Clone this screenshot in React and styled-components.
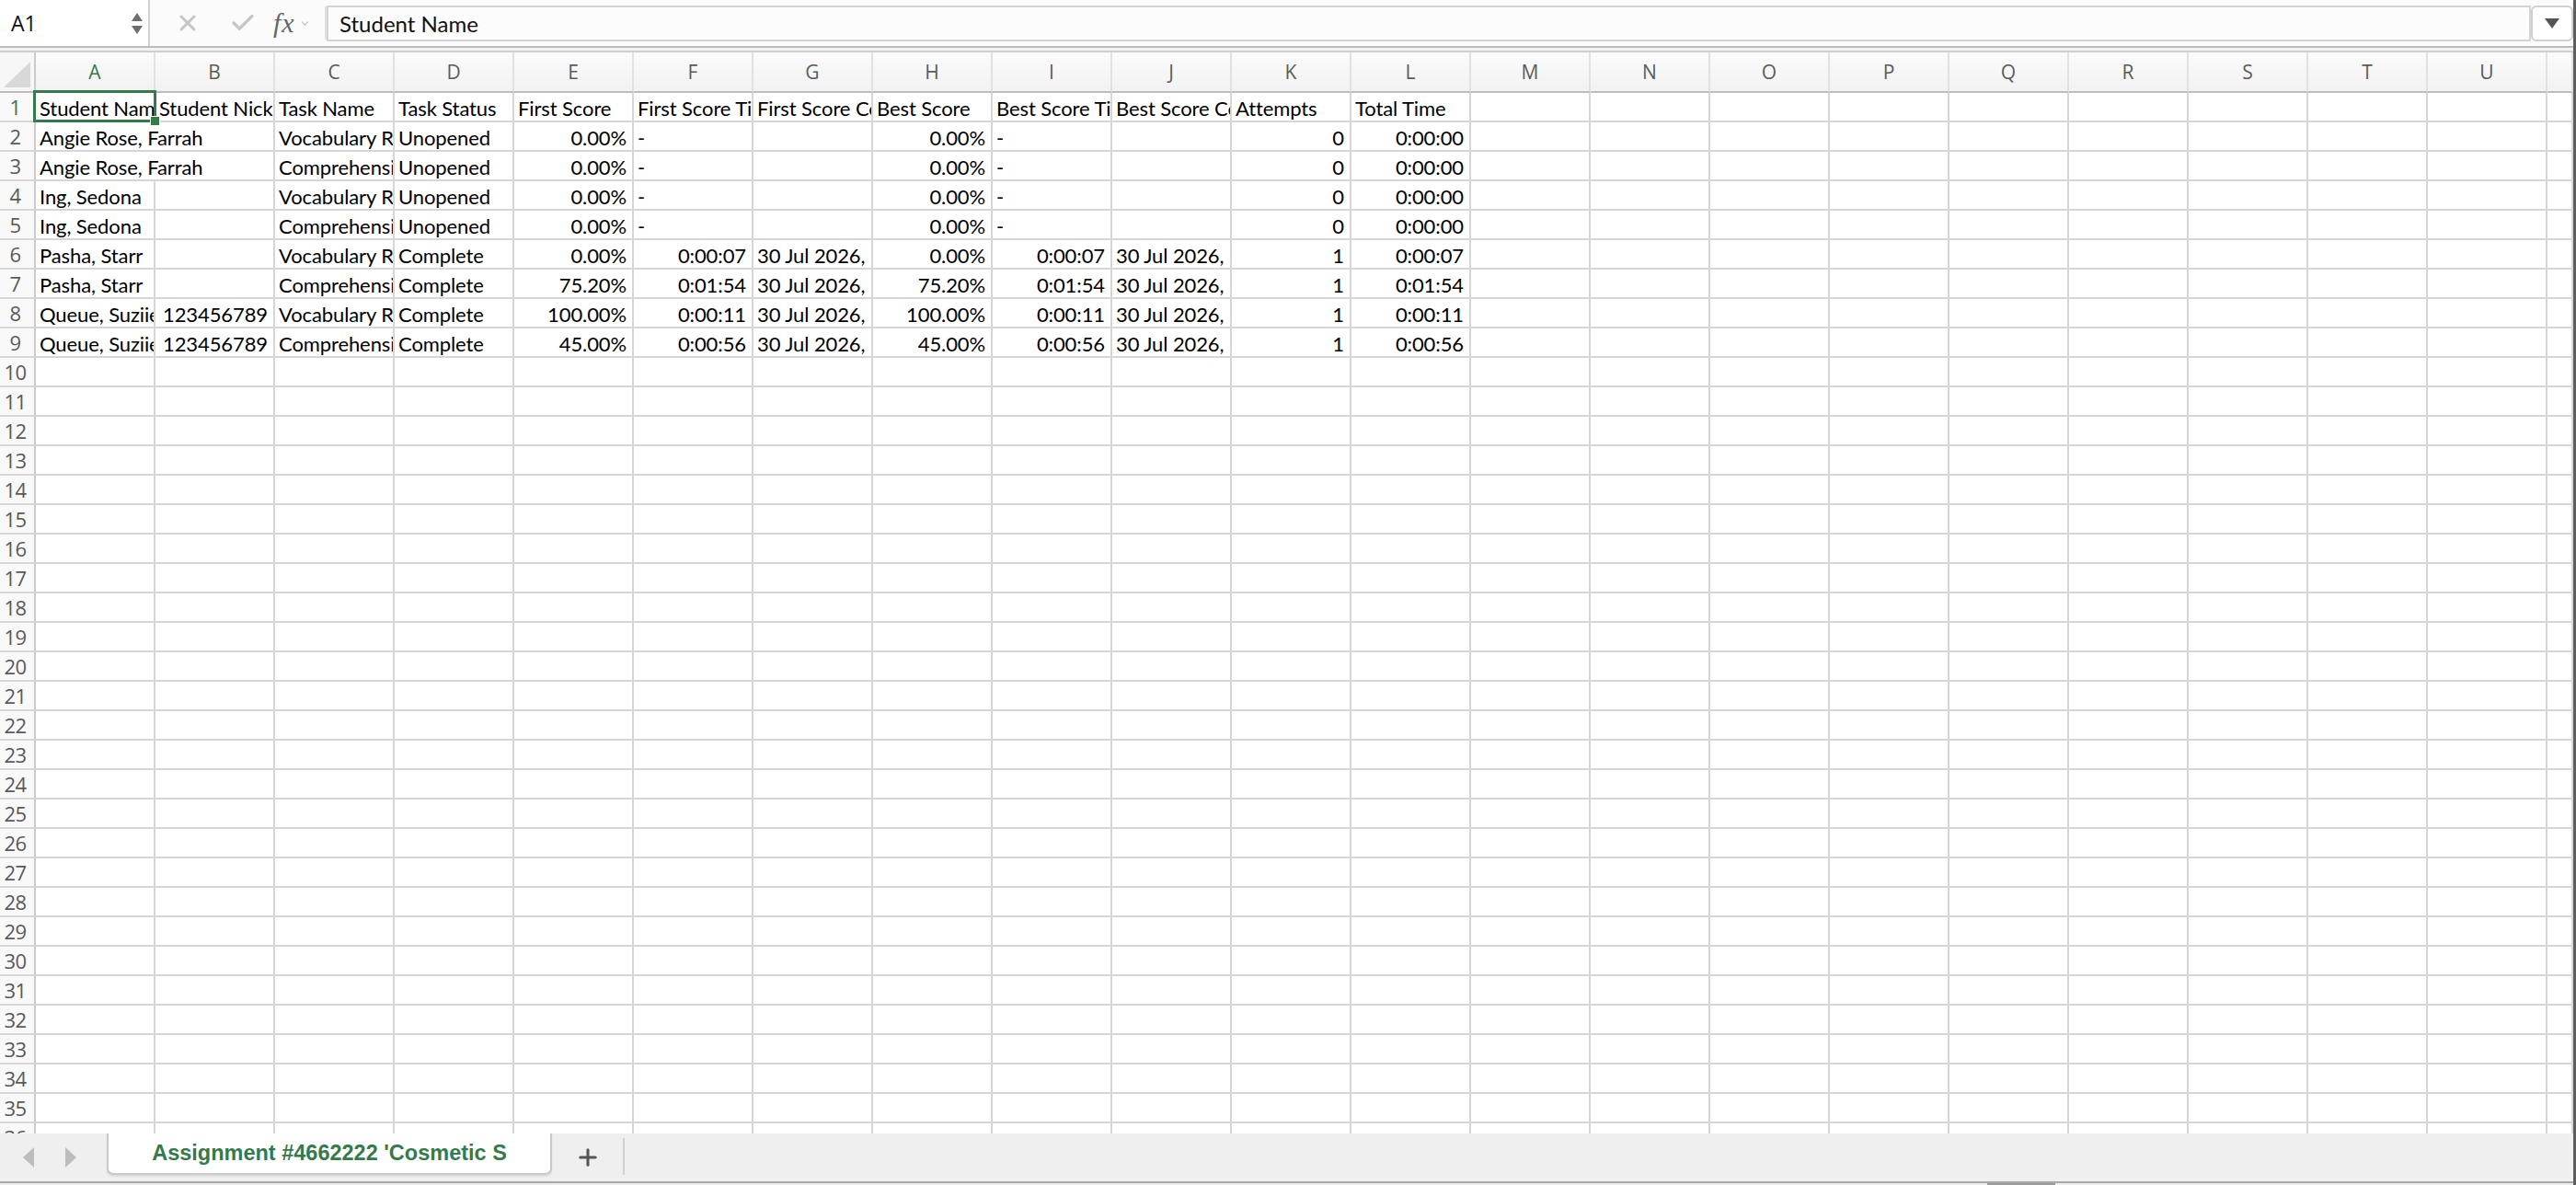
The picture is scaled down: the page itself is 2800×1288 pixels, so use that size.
import styled, { createGlobalStyle } from 'styled-components';
import { X, Check, ChevronDown, Plus } from 'lucide-react';

const GREEN = '#357a4b';
const GRID = '#d6d6d6';

const GlobalStyle = createGlobalStyle`
  html, body {
    margin: 0;
    padding: 0;
    background: #fff;
    overflow: hidden;
  }
`;

const Window = styled.div`
  width: 2800px;
  height: 1288px;
  box-sizing: border-box;
  display: flex;
  flex-direction: column;
  border-right: 3px solid #5e5e5e;
  background: #fff;
  overflow: hidden;
`;

/* ---------- formula bar ---------- */

const Toolbar = styled.div`
  height: 52px;
  box-sizing: border-box;
  display: flex;
  align-items: center;
  background: #fbfbfb;
  border-bottom: 2px solid #bcbcbc;
`;

const NameBox = styled.div`
  width: 163px;
  height: 50px;
  box-sizing: border-box;
  display: flex;
  align-items: center;
  justify-content: space-between;
  padding: 0 6px 0 12px;
  background: #fff;
  border-right: 2px solid #d2d2d2;
  font-family: "Open Sans", sans-serif;
  font-size: 23px;
  color: #111;
`;

const Spinner = styled.div`
  display: flex;
  flex-direction: column;
  gap: 5px;
`;

const SpinArrow = styled.span`
  width: 0;
  height: 0;
  border-left: 6px solid transparent;
  border-right: 6px solid transparent;
  ${({ $down }) => ($down ? 'border-top: 9px solid #6e6e6e;' : 'border-bottom: 9px solid #6e6e6e;')}
`;

const EditIcons = styled.div`
  width: 192px;
  height: 50px;
  display: flex;
  align-items: center;
  padding-left: 27px;
  box-sizing: border-box;
  color: #c6c6c6;
`;

const IconSlot = styled.span`
  display: flex;
  margin-right: ${({ $gap }) => $gap}px;
`;

const Fx = styled.span`
  font-family: "Liberation Serif", serif;
  font-style: italic;
  font-size: 30px;
  letter-spacing: 1px;
  color: #666;
  margin-right: 4px;
`;

const VDivider = styled.span`
  width: 2px;
  height: 36px;
  margin-left: auto;
  background: #e0e0e0;
`;

const FormulaInput = styled.div`
  flex: 1;
  height: 39px;
  box-sizing: border-box;
  display: flex;
  align-items: center;
  padding-left: 12px;
  background: #fcfcfc;
  border: 2px solid #d4d4d4;
  font-family: Lato, sans-serif;
  font-size: 24px;
  color: #111;
`;

const DropButton = styled.div`
  width: 46px;
  height: 39px;
  box-sizing: border-box;
  display: flex;
  align-items: center;
  justify-content: center;
  background: #fff;
  border: 2px solid #d0d0d0;
  border-radius: 6px;
`;

const DropTriangle = styled.span`
  width: 0;
  height: 0;
  border-left: 8px solid transparent;
  border-right: 8px solid transparent;
  border-top: 11px solid #555;
`;

const Divider = styled.div`
  height: 5px;
  box-sizing: border-box;
  background: #f2f2f2;
  border-bottom: 2px solid #cfcfcf;
`;

/* ---------- sheet grid ---------- */

const Sheet = styled.div`
  flex: 1;
  min-height: 0;
  overflow: hidden;
  display: grid;
  grid-template-columns: 39px repeat(21, 130px) 1fr;
  grid-template-rows: 44px;
  grid-auto-rows: 32px;
  align-content: start;
`;

const Corner = styled.div`
  box-sizing: border-box;
  display: flex;
  align-items: flex-end;
  justify-content: flex-end;
  padding: 0 4px 4px 0;
  background: #f7f7f7;
  border-right: 2px solid #cbcbcb;
  border-bottom: 2px solid #bdbdbd;
`;

const CornerMark = styled.span`
  width: 29px;
  height: 28px;
  background: #d8d8d8;
  clip-path: polygon(100% 0, 100% 100%, 0 100%);
`;

const ColHead = styled.div`
  box-sizing: border-box;
  display: flex;
  align-items: center;
  justify-content: center;
  background: linear-gradient(#fbfbfb, #f2f2f2);
  border-right: 2px solid #e1e1e1;
  border-bottom: 2px solid #bdbdbd;
  font-family: "Open Sans", sans-serif;
  font-size: 21px;
  color: ${({ $active }) => ($active ? GREEN : '#5b5b5b')};
`;

const RowHead = styled.div`
  box-sizing: border-box;
  display: flex;
  align-items: center;
  justify-content: center;
  padding-right: 4px;
  background: #f9f9f9;
  border-right: 2px solid #cbcbcb;
  border-bottom: 2px solid ${GRID};
  font-family: "Open Sans", sans-serif;
  font-size: 22px;
  letter-spacing: -0.5px;
  color: ${({ $active }) => ($active ? GREEN : '#595959')};
`;

const Cell = styled.div`
  position: relative;
  grid-column: span ${({ $span }) => $span || 1};
  box-sizing: border-box;
  display: flex;
  align-items: center;
  padding-top: 2px;
  border-right: 2px solid ${GRID};
  border-bottom: 2px solid ${GRID};
  min-width: 0;
`;

const CellText = styled.span`
  flex: 1;
  min-width: 0;
  overflow: hidden;
  white-space: nowrap;
  padding: ${({ $right }) => ($right ? '0 6px 0 0' : '0 0 0 4px')};
  text-align: ${({ $right }) => ($right ? 'right' : 'left')};
  font-family: Lato, sans-serif;
  font-size: 22px;
  letter-spacing: -0.1px;
  color: #000;
`;

const Selection = styled.span`
  position: absolute;
  top: -3px;
  left: -3px;
  right: -3px;
  bottom: -2px;
  border: 3px solid ${GREEN};
  z-index: 2;
  pointer-events: none;
`;

const FillHandle = styled.span`
  position: absolute;
  right: -7px;
  bottom: -7px;
  width: 9px;
  height: 9px;
  background: ${GREEN};
  border: 1px solid #fff;
`;

/* ---------- sheet tabs ---------- */

const TabBar = styled.div`
  height: 52px;
  display: flex;
  align-items: flex-start;
  background: #efefef;
`;

const NavArea = styled.div`
  width: 116px;
  height: 52px;
  display: flex;
  align-items: center;
  gap: 34px;
  padding-left: 25px;
  box-sizing: border-box;
`;

const NavArrow = styled.span`
  width: 0;
  height: 0;
  border-top: 11px solid transparent;
  border-bottom: 11px solid transparent;
  ${({ $dir }) => ($dir === 'left' ? 'border-right: 12px solid #bdbdbd;' : 'border-left: 12px solid #bdbdbd;')}
`;

const SheetTab = styled.div`
  width: 484px;
  height: 45px;
  box-sizing: border-box;
  display: flex;
  align-items: center;
  justify-content: center;
  background: #fff;
  border: 2px solid #c9c9c9;
  border-top: none;
  border-radius: 0 0 7px 7px;
  box-shadow: 0 2px 2px rgba(0, 0, 0, 0.08);
  font-family: "Liberation Sans", Arial, sans-serif;
  font-weight: bold;
  font-size: 23.5px;
  color: ${GREEN};
  white-space: nowrap;
  overflow: hidden;
`;

const AddSheet = styled.div`
  width: 77px;
  height: 52px;
  display: flex;
  align-items: center;
  justify-content: center;
  color: #555;
`;

const TabSeparator = styled.span`
  width: 2px;
  height: 40px;
  margin-top: 5px;
  background: #d2d2d2;
`;

const ScrollTrack = styled.div`
  height: 4px;
  box-sizing: border-box;
  display: flex;
  padding-left: 2160px;
  background: #ececec;
  border-top: 2px solid #a8a8a8;
`;

const ScrollThumb = styled.span`
  width: 74px;
  height: 2px;
  background: #9c9c9c;
`;

/* ---------- data ---------- */

const COLS = 'ABCDEFGHIJKLMNOPQRSTU'.split('');
const TOTAL_SLOTS = 22;
const ROW_COUNT = 36;

const t = (v, span) => ({ v, span });
const n = (v) => ({ v, right: true });

const DATE = '30 Jul 2026, 10:42 am';

const data = [
  [
    t('Student Name'), t('Student Nickname'), t('Task Name'), t('Task Status'),
    t('First Score'), t('First Score Time'), t('First Score Completed'),
    t('Best Score'), t('Best Score Time'), t('Best Score Completed'),
    t('Attempts'), t('Total Time'),
  ],
  [t('Angie Rose, Farrah', 2), t('Vocabulary Review'), t('Unopened'), n('0.00%'), t('-'), t(''), n('0.00%'), t('-'), t(''), n('0'), n('0:00:00')],
  [t('Angie Rose, Farrah', 2), t('Comprehension Quiz'), t('Unopened'), n('0.00%'), t('-'), t(''), n('0.00%'), t('-'), t(''), n('0'), n('0:00:00')],
  [t('Ing, Sedona'), t(''), t('Vocabulary Review'), t('Unopened'), n('0.00%'), t('-'), t(''), n('0.00%'), t('-'), t(''), n('0'), n('0:00:00')],
  [t('Ing, Sedona'), t(''), t('Comprehension Quiz'), t('Unopened'), n('0.00%'), t('-'), t(''), n('0.00%'), t('-'), t(''), n('0'), n('0:00:00')],
  [t('Pasha, Starr'), t(''), t('Vocabulary Review'), t('Complete'), n('0.00%'), n('0:00:07'), t(DATE), n('0.00%'), n('0:00:07'), t(DATE), n('1'), n('0:00:07')],
  [t('Pasha, Starr'), t(''), t('Comprehension Quiz'), t('Complete'), n('75.20%'), n('0:01:54'), t(DATE), n('75.20%'), n('0:01:54'), t(DATE), n('1'), n('0:01:54')],
  [t('Queue, Suziie'), n('123456789'), t('Vocabulary Review'), t('Complete'), n('100.00%'), n('0:00:11'), t(DATE), n('100.00%'), n('0:00:11'), t(DATE), n('1'), n('0:00:11')],
  [t('Queue, Suziie'), n('123456789'), t('Comprehension Quiz'), t('Complete'), n('45.00%'), n('0:00:56'), t(DATE), n('45.00%'), n('0:00:56'), t(DATE), n('1'), n('0:00:56')],
];

// pad every row out to the full width of the visible grid
const rows = Array.from({ length: ROW_COUNT }, (_, r) => {
  const cells = [...(data[r] || [])];
  let used = cells.reduce((sum, c) => sum + (c.span || 1), 0);
  while (used < TOTAL_SLOTS) {
    cells.push(t(''));
    used += 1;
  }
  return cells;
});

export default function App() {
  return (
    <>
      <GlobalStyle />
      <Window>
        <Toolbar>
          <NameBox>
            A1
            <Spinner>
              <SpinArrow />
              <SpinArrow $down />
            </Spinner>
          </NameBox>
          <EditIcons>
            <IconSlot $gap={31}>
              <X size={28} strokeWidth={2.6} />
            </IconSlot>
            <IconSlot $gap={18}>
              <Check size={30} strokeWidth={2.6} />
            </IconSlot>
            <Fx>fx</Fx>
            <ChevronDown size={13} strokeWidth={2} color="#bbb" />
            <VDivider />
          </EditIcons>
          <FormulaInput>Student Name</FormulaInput>
          <DropButton>
            <DropTriangle />
          </DropButton>
        </Toolbar>
        <Divider />

        <Sheet>
          <Corner>
            <CornerMark />
          </Corner>
          {COLS.map((c) => (
            <ColHead key={c} $active={c === 'A'}>{c}</ColHead>
          ))}
          <ColHead />

          {rows.map((cells, r) => [
            <RowHead key={`h${r}`} $active={r === 0}>{r + 1}</RowHead>,
            ...cells.map((c, i) => (
              <Cell key={`${r}-${i}`} $span={c.span}>
                <CellText $right={c.right}>{c.v}</CellText>
                {r === 0 && i === 0 && (
                  <Selection>
                    <FillHandle />
                  </Selection>
                )}
              </Cell>
            )),
          ])}
        </Sheet>

        <TabBar>
          <NavArea>
            <NavArrow $dir="left" />
            <NavArrow $dir="right" />
          </NavArea>
          <SheetTab>Assignment #4662222 'Cosmetic S</SheetTab>
          <AddSheet>
            <Plus size={28} strokeWidth={2.6} />
          </AddSheet>
          <TabSeparator />
        </TabBar>
        <ScrollTrack>
          <ScrollThumb />
        </ScrollTrack>
      </Window>
    </>
  );
}
